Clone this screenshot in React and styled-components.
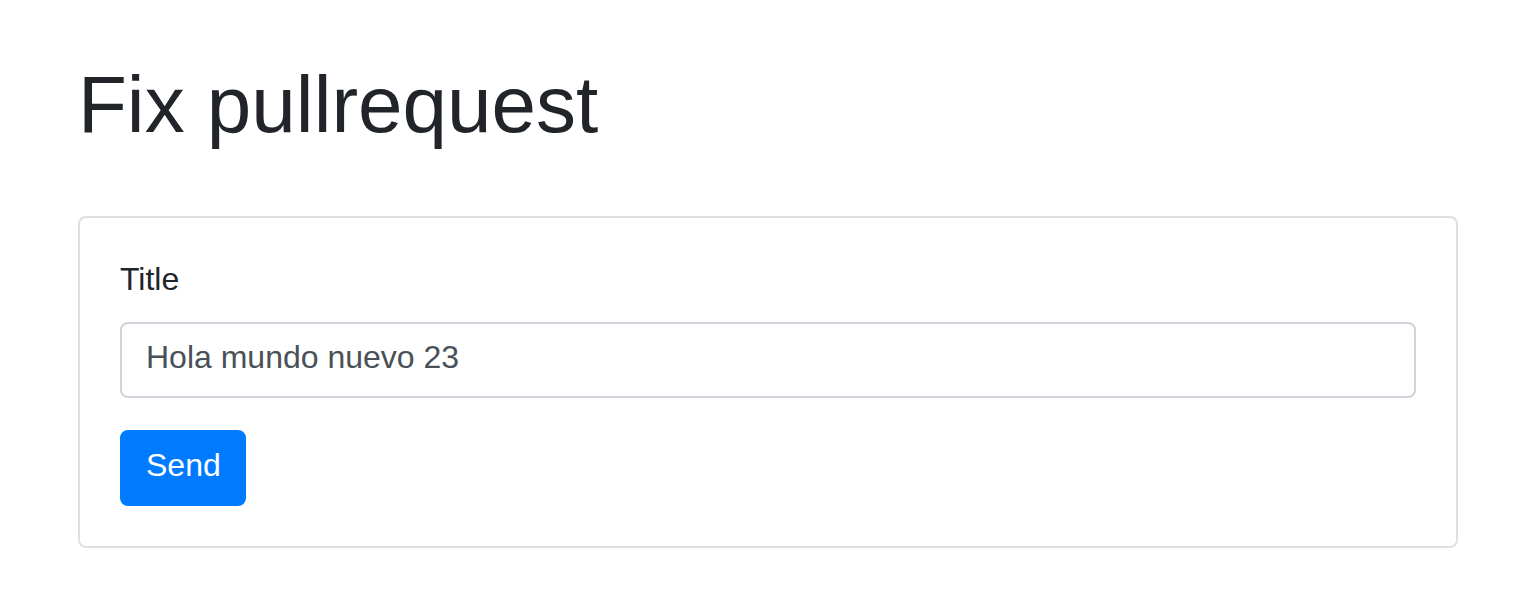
import React, { useState } from 'react';
import styled, { createGlobalStyle } from 'styled-components';

const GlobalStyle = createGlobalStyle`
  html, body {
    margin: 0;
    padding: 0;
    background: #fff;
  }
  body {
    font-family: "Liberation Sans", Arial, sans-serif;
    color: #212529;
  }
  * {
    box-sizing: border-box;
  }
`;

const Container = styled.div`
  max-width: 1440px;
  margin: 0 auto;
  padding: 57px 30px 0;
`;

const Heading = styled.h1`
  margin: 0 0 63px;
  font-size: 80px;
  font-weight: 400;
  line-height: 1.2;
  color: #212529;
`;

const Card = styled.div`
  border: 2px solid rgba(0, 0, 0, 0.125);
  border-radius: 8px;
  padding: 40px;
  background: #fff;
`;

const FormGroup = styled.div`
  margin-bottom: 32px;
`;

const Label = styled.label`
  display: block;
  margin-bottom: 16px;
  padding-bottom: 6px;
  font-size: 32px;
  line-height: 42px;
`;

const Input = styled.input`
  display: block;
  width: 100%;
  height: 76px;
  padding: 9px 24px 15px;
  font-family: inherit;
  font-size: 32px;
  line-height: 48px;
  color: #495057;
  background: #fff;
  border: 2px solid #ced4da;
  border-radius: 8px;
  outline: none;
`;

const Button = styled.button`
  display: inline-block;
  height: 76px;
  padding: 9px 23px 15px 24px;
  font-family: inherit;
  font-size: 32px;
  line-height: 48px;
  color: #fff;
  background: ${props => (props.variant === 'primary' ? '#007bff' : '#6c757d')};
  border: 2px solid ${props => (props.variant === 'primary' ? '#007bff' : '#6c757d')};
  border-radius: 8px;
  cursor: pointer;
`;

const App = () => {
  const [title, setTitle] = useState('Hola mundo nuevo 23');

  return (
    <>
      <GlobalStyle />
      <Container>
        <Heading>Fix pullrequest</Heading>
        <Card>
          <FormGroup>
            <Label htmlFor="title">Title</Label>
            <Input
              id="title"
              type="text"
              value={title}
              onChange={(e) => setTitle(e.target.value)}
            />
          </FormGroup>
          <Button variant="primary" type="button">Send</Button>
        </Card>
      </Container>
    </>
  );
};

export default App;
